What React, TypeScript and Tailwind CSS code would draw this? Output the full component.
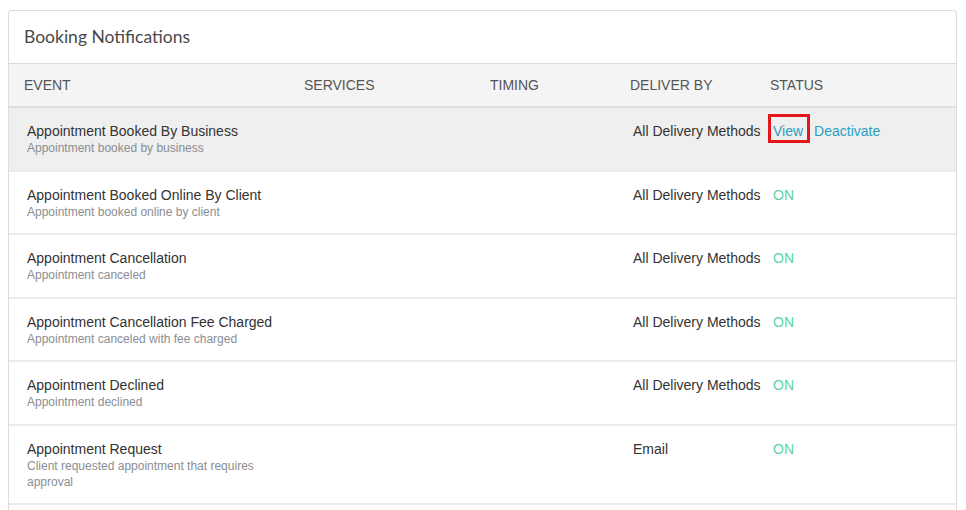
const rows = [
  { title: "Appointment Booked By Business", sub: "Appointment booked by business", deliver: "All Delivery Methods", hover: true },
  { title: "Appointment Booked Online By Client", sub: "Appointment booked online by client", deliver: "All Delivery Methods" },
  { title: "Appointment Cancellation", sub: "Appointment canceled", deliver: "All Delivery Methods" },
  { title: "Appointment Cancellation Fee Charged", sub: "Appointment canceled with fee charged", deliver: "All Delivery Methods" },
  { title: "Appointment Declined", sub: "Appointment declined", deliver: "All Delivery Methods" },
  { title: "Appointment Request", sub: "Client requested appointment that requires approval", deliver: "Email" },
];

const cols = "grid grid-cols-[280px_186px_140px_140px_1fr]";

export default function App() {
  return (
    <div className="min-h-screen bg-white px-2 pt-[10px] font-['Liberation_Sans',Arial,sans-serif]">
      <div className="w-[949px] overflow-hidden rounded-t-[4px] border border-b-0 border-[#dcdcdc] bg-white">
        <div className="flex h-[53px] items-center border-b border-[#dcdcdc] px-[15px]">
          <h1 className="font-['Lato',sans-serif] text-[17.5px] text-[#4a4a4a]">Booking Notifications</h1>
        </div>

        <div className={`${cols} h-[44px] items-center border-b-2 border-[#dedede] bg-[#f4f4f4] text-[14px] text-[#555]`}>
          <span className="pl-[15px]">EVENT</span>
          <span className="pl-[15px]">SERVICES</span>
          <span className="pl-[15px]">TIMING</span>
          <span className="pl-[15px]">DELIVER BY</span>
          <span className="pl-[15px]">STATUS</span>
        </div>

        {rows.map((r, i) => (
          <div
            key={r.title}
            className={`${cols} ${i > 0 ? "border-t-2 border-[#ececec]" : ""} ${i === rows.length - 1 ? "border-b-2" : ""} ${r.hover ? "bg-[#efefef]" : "bg-white"} pt-[14px] pb-[13.5px]`}
          >
            <div className="pl-[18px]">
              <div className="whitespace-nowrap text-[14px] leading-[18px] text-[#333]">{r.title}</div>
              <div className="max-w-[250px] text-[12px] leading-[16px] text-[#8a8e92]">{r.sub}</div>
            </div>
            <div />
            <div />
            <div className="whitespace-nowrap pl-[18px] text-[14px] leading-[18px] text-[#333]">{r.deliver}</div>
            <div className="whitespace-nowrap pl-[18px] text-[14px] leading-[18px]">
              {r.hover ? (
                <span className="text-[#2aa0bf]">
                  <span className="relative inline-block">
                    <span className="absolute -top-[8px] -bottom-[3px] -left-[5px] -right-[7px] border-[3px] border-[#e3171b]" />
                    View
                  </span>
                  <span className="ml-[11px]">Deactivate</span>
                </span>
              ) : (
                <span className="text-[#5cd4a2]">ON</span>
              )}
            </div>
          </div>
        ))}
        <div className="h-[20px] bg-white" />
      </div>
    </div>
  );
}
